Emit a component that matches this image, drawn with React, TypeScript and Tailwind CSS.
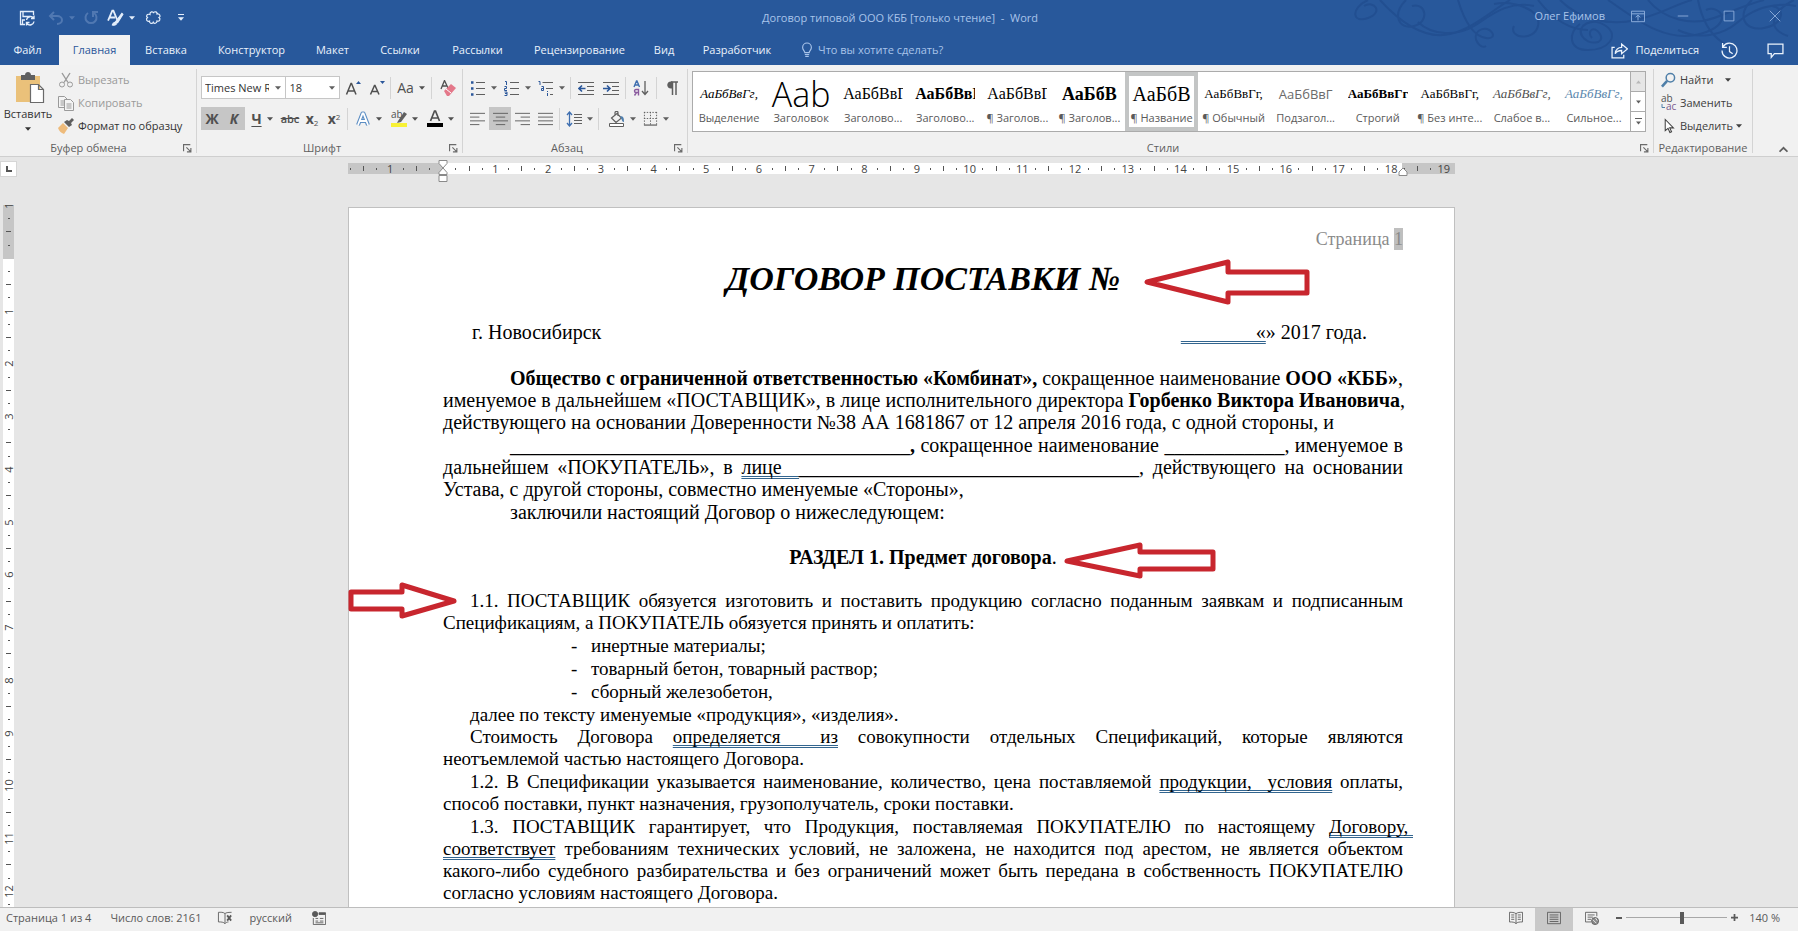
import React from "react";
import { clsx } from "clsx";

type KidsProps = { children?: React.ReactNode; className?: string };

const TABS = [
  { name: "Вставка", w: "w-[72px]" },
  { name: "Конструктор", w: "w-[99px]" },
  { name: "Макет", w: "w-[63px]" },
  { name: "Ссылки", w: "w-[72px]" },
  { name: "Рассылки", w: "w-[83px]" },
  { name: "Рецензирование", w: "w-[121px]" },
  { name: "Вид", w: "w-[48px]" },
  { name: "Разработчик", w: "w-[98px]" },
];

const STYLES = [
  { sample: "АаБбВвГг,", name: "Выделение", cls: "italic text-[13px]" },
  { sample: "Ааb", name: "Заголовок", cls: "font-['Open_Sans'] font-light text-[34px]" },
  { sample: "АаБбВвГ", name: "Заголово...", cls: "text-base" },
  { sample: "АаБбВвГ", name: "Заголово...", cls: "text-base font-bold" },
  { sample: "АаБбВвГ", name: "¶ Заголов...", cls: "text-base" },
  { sample: "АаБбВ", name: "¶ Заголов...", cls: "text-lg font-bold" },
  { sample: "АаБбВ", name: "¶ Название", cls: "text-xl", active: true },
  { sample: "АаБбВвГг,", name: "¶ Обычный", cls: "text-[13px]" },
  { sample: "АаБбВвГ", name: "Подзагол...", cls: "font-['Open_Sans'] text-[13px] text-[#6a6a6a]" },
  { sample: "АаБбВвГг", name: "Строгий", cls: "text-[13px] font-bold" },
  { sample: "АаБбВвГг,", name: "¶ Без инте...", cls: "text-[13px]" },
  { sample: "АаБбВвГг,", name: "Слабое в...", cls: "text-[13px] italic text-[#505050]" },
  { sample: "АаБбВвГг,", name: "Сильное...", cls: "text-[13px] italic text-[#5b87ad]" },
];

function Caret({ className }: { className?: string }) {
  return (
    <svg className={clsx("h-1 shrink-0", className ?? "w-[7px]")} viewBox="0 0 7 4" fill="currentColor">
      <path d="M0 0h7L3.5 4z" />
    </svg>
  );
}

function Icon({ children, className }: KidsProps) {
  return (
    <svg className={clsx("shrink-0", className ?? "size-4")} viewBox="0 0 16 16" fill="none" stroke="currentColor">
      {children}
    </svg>
  );
}

function Sep() {
  return <span className="mx-[2px] h-[22px] w-px shrink-0 bg-[#d4d4d4]" />;
}

type BtnProps = KidsProps & { label: string; caret?: boolean };
function Btn({ label, caret, className, children }: BtnProps) {
  return (
    <button
      type="button"
      aria-label={label}
      className={clsx("flex h-[23px] shrink-0 items-center justify-center gap-[5px]", className)}
    >
      {children}
      {caret && <Caret className="w-[6px]" />}
    </button>
  );
}

// ribbon group: controls on top, caption and launcher at the bottom
type GroupProps = KidsProps & { title: string; launcher?: boolean };
function Group({ title, launcher, className, children }: GroupProps) {
  return (
    <section className={clsx("mb-[3px] mt-1 flex flex-col border-r border-[#d4d4d4]", className)}>
      <div className="flex-1">{children}</div>
      <div className="-mb-1 flex h-[18px] items-center">
        <span className={clsx("flex-1 text-center text-[#5f5f5f]", launcher && "pr-[6px]")}>{title}</span>
        {launcher && (
          <button type="button" aria-label={title} className="pr-1 text-[#6a6a6a]">
            <Icon className="size-[9px]">
              <path strokeWidth="2" d="M1 13V1h12M6 6l8 8M14 7v7H7" />
            </Icon>
          </button>
        )}
      </div>
    </section>
  );
}

function Swirls() {
  return (
    <svg
      className="pointer-events-none absolute right-0 top-0 h-[60px] w-[450px]"
      viewBox="0 0 450 60"
      fill="none"
      stroke="#224f91"
      strokeWidth="2"
    >
      <path d="M20 0c-18 8-16 24 0 18s6-18-4-12M32 0c20 22 44 40 70 34 22-5 40-22 60-34M58 0c-14 14-8 30 8 26s12-24-2-20" />
      <path d="M70 22c14 14 40 14 56 4s34-26 60-20M110 0c6 20 14 36 28 38s4-14-6-8 0 20 6 16" />
      <path d="M146 4c20-4 48 6 44 22s-30 12-24 0M190 0c14 18 30 30 50 30" />
      <path d="M232 24c-12 8-12 26 8 26s32-14 18-24-30 0-24 10 24 8 18-2-14-2-8 4" />
      <path d="M212 0c20 20 50 26 76 20s40-16 56-20M260 0c24 16 56 44 92 34s20-30 6-24M300 0c16 20 44 26 66 18s34-14 50-18" />
      <path d="M350 0c4 20 12 34 24 42s12 12 4 8M330 30c20 10 44 6 60-8s34-20 58-16M404 0c-16 14-8 32 12 28s22-20 8-22M446 0c-20 10-30 28-6 36" />
    </svg>
  );
}

function TitleBar() {
  return (
    <div className="flex h-[35px] items-center text-[#e4eefb]">
      <div className="flex flex-1 items-center pl-[19px]">
        <button type="button" aria-label="Сохранить">
          <Icon>
            <path strokeWidth="1.300" d="M6 14.500H1.500v-13h13V5M4 1.500v5h7M3.500 14v-4H6" />
            <path strokeWidth="1.400" d="M7.500 10a4 4 0 0 1 7-2M15 5.500v3h-3M15 11.500a4 4 0 0 1-7 2M7.500 15.500v-3h3" />
          </Icon>
        </button>
        <button type="button" aria-label="Отменить" className="ml-[13px] flex items-center gap-[5px] text-[#5078b2]">
          <Icon>
            <path strokeWidth="2" d="M6 2L2 6l4 4M2 6h7c3 0 5 2 5 4s-2 4-5 4" />
          </Icon>
          <Caret className="w-[6px]" />
        </button>
        <button type="button" aria-label="Повторить" className="ml-2 text-[#5078b2]">
          <Icon>
            <path strokeWidth="2" d="M11 3a5.500 5.500 0 1 1-6 0M10 7V2h5" />
          </Icon>
        </button>
        <button type="button" aria-label="Стили" className="ml-2 flex items-center gap-[5px]">
          <Icon className="size-[17px]">
            <path strokeWidth="1.700" d="M1 11L5 1.500h1L9.500 10M2.500 8h5" />
            <path fill="currentColor" d="M8 12l6-8 1 1-5 8zM5 15c1-3 3-3 4-1-1 1-3 1.500-4 1z" />
          </Icon>
          <Caret className="w-[6px]" />
        </button>
        <button type="button" aria-label="Облако" className="ml-[10px]">
          <Icon className="h-4 w-[17px]">
            <path
              strokeWidth="1.200"
              d="M4.500 4.500c-.5-3 3-3.500 3.500-1.500.5-2 4-1.500 3.500 1 3-.5 4 2.500 2 3.500 2 1.500.5 4.500-2 3.500 0 2.500-3 3-3.800 1.200-1 2-4 1.300-3.700-1-2.800.8-4-2.200-2-3.700-2-1.500-.5-4 2.500-3z"
            />
          </Icon>
        </button>
        <button type="button" aria-label="Настройка панели" className="ml-4 flex flex-col items-center gap-[2px]">
          <span className="h-px w-[6px] bg-current" />
          <Caret className="w-[6px]" />
        </button>
      </div>
      <h1 className="text-[#a9c4ea]">Договор типовой ООО КББ [только чтение] &nbsp;-&nbsp; Word</h1>
      <div className="relative flex flex-1 items-center justify-end pb-1 pr-[17px] text-[#8fafdd]">
        <span className="mr-[26px] text-[#a9c4ea]">Олег Ефимов</span>
        <button type="button" aria-label="Параметры ленты" className="mr-8">
          <Icon className="size-[14px]">
            <path strokeWidth="1.100" d="M.5 2.500h15v12H.5zM.5 5.500h15M8 13V7M5.500 9.500L8 7l2.500 2.500" />
          </Icon>
        </button>
        <button type="button" aria-label="Свернуть" className="mr-[34px]">
          <Icon className="size-3">
            <path strokeWidth="1.200" d="M1 8h14" />
          </Icon>
        </button>
        <button type="button" aria-label="Развернуть" className="mr-[34px]">
          <Icon className="size-3">
            <path strokeWidth="1.200" d="M1.500 1.500h13v13h-13z" />
          </Icon>
        </button>
        <button type="button" aria-label="Закрыть">
          <Icon className="size-3">
            <path strokeWidth="1.200" d="M1 1l14 14M15 1L1 15" />
          </Icon>
        </button>
      </div>
    </div>
  );
}

function Tabs() {
  return (
    <nav className="relative flex h-[30px] items-stretch text-[#eaf2fc]">
      <button type="button" className="w-[59px] pr-1">Файл</button>
      <button type="button" className="w-[71px] bg-[#f2f2f2] text-[#2b579a]">Главная</button>
      {TABS.map((t) => (
        <button key={t.name} type="button" className={clsx("shrink-0", t.w)}>
          {t.name}
        </button>
      ))}
      <button type="button" className="ml-[14px] flex items-center gap-1 text-[#a9c4ea]">
        <Icon className="h-4 w-[14px]">
          <path strokeWidth="1.300" d="M5.500 11c0-2-2.500-3-2.500-6a5 5 0 0 1 10 0c0 3-2.500 4-2.500 6zM5.500 13.200h5M6 15.300h4" />
        </Icon>
        Что вы хотите сделать?
      </button>
      <div className="ml-auto flex items-center pr-[14px]">
        <button type="button" className="flex items-center gap-2">
          <Icon className="size-[17px]">
            <path strokeWidth="1.200" d="M3.500 5H1v10h11v-3M4 11c0-4 3-6 6-6V2l5.500 4.500L10 11V8c-3 0-5 1-6 3z" />
          </Icon>
          Поделиться
        </button>
        <button type="button" aria-label="Журнал" className="ml-[22px]">
          <Icon className="size-[17px]">
            <path strokeWidth="1.200" d="M2 4.500A7 7 0 1 1 1 8M1.500 1v4h4M8 4v5l3 2" />
          </Icon>
        </button>
        <button type="button" aria-label="Примечания" className="ml-[29px]">
          <Icon className="size-[17px]">
            <path strokeWidth="1.200" d="M1 2h14v9H7l-3 3.500V11H1z" />
          </Icon>
        </button>
      </div>
    </nav>
  );
}

function ClipboardGroup() {
  return (
    <Group title="Буфер обмена" launcher className="w-[197px]">
      <div className="flex">
        <button type="button" className="flex w-14 flex-col items-center pt-[3px] text-[#333]">
          <svg className="ml-1 h-8 w-[30px]" viewBox="0 0 30 32">
            <path fill="#eac17a" d="M1 4h24v26H1z" />
            <path fill="#5f5f5f" d="M6 3h4c0-4 6-4 6 0h4v5H6z" />
            <path fill="#fff" stroke="#6a6a6a" strokeWidth="1.200" d="M15.500 12.500h8l5 5v13h-13zM23.500 12.500v5h5" />
          </svg>
          <span className="mt-[2px]">Вставить</span>
          <Caret className="mt-[5px] w-[6px]" />
        </button>
        <div className="-mt-px flex flex-col items-start pl-[2px]">
          <button type="button" className="flex h-[23px] items-center gap-1 text-[#9a9a9a]">
            <Icon>
              <path strokeWidth="1.400" d="M4 1l6 9.500M12 1L6 10.500" />
              <circle cx="4" cy="12.500" r="2.500" />
              <circle cx="12" cy="12.500" r="2.500" />
            </Icon>
            Вырезать
          </button>
          <button type="button" className="flex h-[23px] items-center gap-1 text-[#9a9a9a]">
            <Icon>
              <path fill="#f4f4f4" d="M.5 1.500h6l3 3v8h-9zM2.500 6h5M2.500 8h5M2.500 10h5" />
              <path fill="#f4f4f4" d="M6.500 4.500h6l3 3v8h-9zM8.500 9h5M8.500 11h5M8.500 13h5" />
            </Icon>
            Копировать
          </button>
          <button type="button" className="flex h-[23px] items-center gap-1 text-[#333]">
            <Icon>
              <path stroke="none" fill="#5f5f5f" d="M11 3l3-3 2 2-3 3 1 2-3 2-5-5 3-2z" />
              <path stroke="none" fill="#eebb7b" d="M5 5l5 5-4 6c-3-1-5-3-6-6z" />
            </Icon>
            Формат по образцу
          </button>
        </div>
      </div>
    </Group>
  );
}

type ComboProps = { label: string; value: string; className: string };
function Combo({ label, value, className }: ComboProps) {
  return (
    <label className={clsx("relative h-[23px] border border-[#c6c6c6] bg-white", className)}>
      <select aria-label={label} defaultValue={value} className="h-full w-full appearance-none bg-white pl-[3px] pr-4 text-[#333] outline-none">
        <option>{value}</option>
      </select>
      <Caret className="absolute right-1 top-[9px] w-[6px] text-[#5f5f5f]" />
    </label>
  );
}

function FontGroup() {
  return (
    <Group title="Шрифт" launcher className="w-[266px] pl-1 text-[#505050]">
      <div className="mt-[7px] flex items-center">
        <Combo label="Шрифт" value="Times New R" className="w-[86px]" />
        <Combo label="Размер" value="18" className="-ml-px w-[55px]" />
        <Btn label="Увеличить размер" className="w-[26px]">
          <Icon>
            <path strokeWidth="1.500" d="M1.500 14.500L6 3.500h.5l4.500 11M3 11h6.500" />
            <path stroke="none" fill="#2b579a" d="M11 4l2.500-3L16 4z" />
          </Icon>
        </Btn>
        <Btn label="Уменьшить размер" className="w-[22px]">
          <Icon>
            <path strokeWidth="1.500" d="M1.500 14.500L5.500 5.500H6l4 9M3 11.500h5.500" />
            <path stroke="none" fill="#2b579a" d="M11 1h5l-2.500 3z" />
          </Icon>
        </Btn>
        <Sep />
        <Btn label="Регистр" caret className="w-9">
          <span className="text-sm">Aa</span>
        </Btn>
        <Sep />
        <Btn label="Очистить формат" className="w-7">
          <Icon>
            <path strokeWidth="1.300" d="M1 9l3.500-8.500L8 8M2.500 6h4" />
            <path stroke="none" fill="#e4788a" d="M4 11l7-7 5 4-7 8H7z" />
            <path stroke="#fff" d="M6 9l5 4" />
          </Icon>
        </Btn>
      </div>
      <div className="mt-2 flex items-center">
        <Btn label="Полужирный" className="w-[22px] bg-[#c6c6c6]">
          <b className="text-sm">Ж</b>
        </Btn>
        <Btn label="Курсив" className="w-[22px] bg-[#c6c6c6]">
          <b className="text-sm italic">К</b>
        </Btn>
        <Btn label="Подчеркнутый" caret className="w-[34px]">
          <b className="text-sm underline underline-offset-2">Ч</b>
        </Btn>
        <Btn label="Зачеркнутый" className="w-[22px]">
          <span className="text-[11px] font-semibold line-through">abc</span>
        </Btn>
        <Btn label="Подстрочный" className="w-[22px]">
          <span className="text-sm font-bold">
            x<sub className="text-[8px] font-normal">2</sub>
          </span>
        </Btn>
        <Btn label="Надстрочный" className="w-[22px]">
          <span className="text-sm font-bold">
            x<sup className="text-[8px] font-normal">2</sup>
          </span>
        </Btn>
        <Sep />
        <Btn label="Эффекты" caret className="w-9">
          <Icon>
            <path stroke="#5c8ec4" strokeWidth="4" strokeLinejoin="round" d="M3 14L7.500 2.500h1L13 14M5 10h6" />
            <path stroke="#fff" strokeWidth="1.800" d="M3 14L7.500 2.500h1L13 14M5 10h6" />
          </Icon>
        </Btn>
        <Btn label="Выделение цветом" caret className="w-9">
          <svg className="h-[19px] w-4 shrink-0" viewBox="0 0 16 19">
            <text x="0" y="9" fontSize="10" fill="#505050" className="font-['Open_Sans']">ab</text>
            <path fill="#5f5f5f" d="M7 12l6-9 3 2-6 8-4 1z" />
            <path fill="#f8f135" d="M0 14h16v4H0z" />
          </svg>
        </Btn>
        <Btn label="Цвет текста" caret className="w-9">
          <svg className="h-[19px] w-4 shrink-0" viewBox="0 0 16 19" fill="none">
            <path stroke="#505050" strokeWidth="1.700" d="M3.500 12L7.500 2h1l4 10M5 9h6" />
            <path fill="#000" d="M0 14h16v4H0z" />
          </svg>
        </Btn>
      </div>
    </Group>
  );
}

function ParagraphGroup() {
  return (
    <Group title="Абзац" launcher className="w-[225px] pl-[3px] text-[#5f5f5f]">
      <div className="mt-[7px] flex items-center">
        <Btn label="Маркеры" caret className="w-[34px]">
          <Icon>
            <path d="M6 2.500h9M6 8.500h9M6 14.500h9" />
            <path stroke="#2b579a" strokeWidth="2.500" d="M1 2.500h2.500M1 8.500h2.500M1 14.500h2.500" />
          </Icon>
        </Btn>
        <Btn label="Нумерация" caret className="w-[34px]">
          <Icon>
            <path d="M6 2.500h9M6 8.500h9M6 14.500h9" />
            <path stroke="#2b579a" d="M1 1.500h1.500V5M.5 6.500h2v2h-2v2h2.500M.5 12h2.500v3.500H.5M1 13.500h2" />
          </Icon>
        </Btn>
        <Btn label="Многоуровневый список" caret className="w-[34px]">
          <Icon>
            <path d="M4.500 2.500H15M8 8.500h7M12 14.500h3" />
            <path stroke="#2b579a" d="M.5 1.500H2V5M3.500 6.500h2v4h-2v-2h2M9.500 11v1M9.500 13v3" />
          </Icon>
        </Btn>
        <Sep />
        <Btn label="Уменьшить отступ" className="w-[26px]">
          <Icon>
            <path d="M0 2.500h16M9 6.500h7M9 10.500h7M0 14.500h16" />
            <path stroke="#2b579a" strokeWidth="1.600" d="M7.500 8.500H1M4 5.500l-3 3 3 3" />
          </Icon>
        </Btn>
        <Btn label="Увеличить отступ" className="w-6">
          <Icon>
            <path d="M0 2.500h16M9 6.500h7M9 10.500h7M0 14.500h16" />
            <path stroke="#2b579a" strokeWidth="1.600" d="M0 8.500h6.500M4 5.500l3 3-3 3" />
          </Icon>
        </Btn>
        <Sep />
        <Btn label="Сортировка" className="w-[26px]">
          <Icon>
            <path stroke="#3f6fb0" strokeWidth="1.400" d="M1 7l2.500-6H4l2.500 6M2 5h3.500" />
            <path stroke="#8a5a9e" strokeWidth="1.400" d="M1.500 15.500l2-3M5.500 15.500v-6H3c-2 0-2 3 0 3h2.500" />
            <path strokeWidth="1.300" d="M12 1v13M9 11l3 3.500 3-3.500" />
          </Icon>
        </Btn>
        <Sep />
        <Btn label="Знаки абзаца" className="w-[26px]">
          <Icon>
            <path strokeWidth="1.500" d="M8.500 2v13M12 2v13M14 2H7" />
            <path stroke="none" fill="currentColor" d="M8.500 1.500v7H7c-5 0-5-7 0-7z" />
          </Icon>
        </Btn>
      </div>
      <div className="mt-2 flex items-center">
        <Btn label="По левому краю" className="w-[23px]">
          <Icon className="size-[15px]">
            <path d="M0 2.500h16M0 6.500h10M0 10.500h16M0 14.500h10" />
          </Icon>
        </Btn>
        <Btn label="По центру" className="w-[22px] bg-[#c6c6c6]">
          <Icon className="size-[15px]">
            <path d="M0 2.500h16M3 6.500h10M0 10.500h16M3 14.500h10" />
          </Icon>
        </Btn>
        <Btn label="По правому краю" className="w-[23px]">
          <Icon className="size-[15px]">
            <path d="M0 2.500h16M6 6.500h10M0 10.500h16M6 14.500h10" />
          </Icon>
        </Btn>
        <Btn label="По ширине" className="w-[23px]">
          <Icon className="size-[15px]">
            <path d="M0 2.500h16M0 6.500h16M0 10.500h16M0 14.500h16" />
          </Icon>
        </Btn>
        <Sep />
        <Btn label="Интервал" caret className="w-[34px]">
          <Icon>
            <path d="M8 3.500h8M8 6.500h8M8 9.500h8M8 12.500h8" />
            <path stroke="#3f6fb0" strokeWidth="1.300" d="M3.500 1v14M1 4l2.500-3L6 4M1 12l2.500 3L6 12" />
          </Icon>
        </Btn>
        <Sep />
        <Btn label="Заливка" caret className="ml-1 w-[34px]">
          <Icon>
            <path strokeWidth="1.200" d="M2.500 7L8 2.500 12.500 7 7 11.500zM6 5V1.500c0-1.500 3-1.500 3 0V5" />
            <path stroke="none" fill="#4f7fae" d="M11 5c4 0 4 3 4 6-2 0-2-2-3-4z" />
            <path fill="#fff" d="M.5 12.500h14v3H.5z" />
          </Icon>
        </Btn>
        <Btn label="Границы" caret className="w-[34px]">
          <Icon className="size-[15px]">
            <path strokeDasharray="1.500 1.500" d="M1.500 1v14M8 1v14M14.500 1v14M1 1.500h14M1 8h14" />
            <path strokeWidth="1.300" d="M1 15h14" />
          </Icon>
        </Btn>
      </div>
    </Group>
  );
}

function StylesGroup() {
  return (
    <Group title="Стили" launcher className="min-w-0 flex-1 pl-1">
      <div className="mr-[7px] mt-[2px] flex h-[61px] border border-[#ababab] bg-white">
        <ul className="flex min-w-0 flex-1 text-black">
          {STYLES.map((s, i) => (
            <li key={i} className="min-w-0 flex-1">
              <button
                type="button"
                className={clsx(
                  "flex h-full w-full flex-col items-center justify-end border-4 pb-px",
                  s.active ? "border-[#c3c5c5]" : "border-transparent",
                )}
              >
                <span
                  className={clsx(
                    "w-[60px] overflow-hidden whitespace-nowrap text-center leading-8",
                    !s.cls.startsWith("font-") && "font-['Liberation_Serif']",
                    s.cls,
                  )}
                >
                  {s.sample}
                </span>
                <span className="whitespace-nowrap text-[#5a5a5a]">{s.name}</span>
              </button>
            </li>
          ))}
        </ul>
        <div className="flex w-[15px] flex-col divide-y divide-[#ababab] border-l border-[#ababab] text-[#5f5f5f]">
          <button type="button" aria-label="Вверх" className="flex flex-1 items-center justify-center bg-[#e6e6e6] text-[#b8b8b8]">
            <Caret className="w-[5px] rotate-180" />
          </button>
          <button type="button" aria-label="Вниз" className="flex flex-1 items-center justify-center">
            <Caret className="w-[5px]" />
          </button>
          <button type="button" aria-label="Все стили" className="flex flex-1 flex-col items-center justify-center gap-[2px]">
            <span className="h-px w-[7px] bg-current" />
            <Caret className="w-[5px]" />
          </button>
        </div>
      </div>
    </Group>
  );
}

function EditGroup() {
  return (
    <Group title="Редактирование" className="w-[99px]">
      <div className="-mt-px flex flex-col items-start pl-[7px] text-[#404040]">
        <button type="button" className="flex h-[23px] items-center gap-1">
          <Icon className="h-4 w-[15px]">
            <circle cx="10" cy="5.500" r="4.500" stroke="#4f7fa8" strokeWidth="1.600" />
            <path stroke="#4f7fa8" strokeWidth="2.800" d="M1 15l5.500-6" />
          </Icon>
          Найти
          <Caret className="ml-2 w-[6px]" />
        </button>
        <button type="button" className="flex h-[23px] items-center gap-1">
          <svg className="h-[18px] w-[15px] overflow-visible" viewBox="0 0 15 18">
            <text x="0" y="8" fontSize="10" fill="#505050" className="font-['Open_Sans']">ab</text>
            <text x="5" y="16" fontSize="10" fill="#7a5a8e" className="font-['Open_Sans']">ac</text>
            <path stroke="#4f7fa8" fill="none" d="M1 10v3.500h3" />
          </svg>
          Заменить
        </button>
        <button type="button" className="flex h-[23px] items-center gap-1">
          <Icon className="h-4 w-[15px]">
            <path fill="#fff" strokeWidth="1.100" d="M4.500 1v12l3-2.500 2 4.500 1.800-.8-2-4.200h4z" />
          </Icon>
          Выделить
          <Caret className="-ml-px w-[6px]" />
        </button>
      </div>
    </Group>
  );
}

function Ribbon() {
  return (
    <div className="flex h-[92px] border-b border-[#cfcfcf] bg-[#f1f1f1]">
      <ClipboardGroup />
      <FontGroup />
      <ParagraphGroup />
      <StylesGroup />
      <EditGroup />
      <div className="flex w-[45px] items-end justify-end pb-[2px] pr-[10px] text-[#5f5f5f]">
        <button type="button" aria-label="Свернуть ленту">
          <Icon className="size-[9px]">
            <path strokeWidth="3" d="M1 12l7-7 7 7" />
          </Icon>
        </button>
      </div>
    </div>
  );
}

// a quarter of a centimetre per mark
type MarkProps = { quarter: number; vertical?: boolean };
function RulerMark({ quarter, vertical }: MarkProps) {
  let mark = <span className={vertical ? "h-px w-[2px] bg-[#555]" : "h-[2px] w-px bg-[#555]"} />;
  if (quarter % 4 === 0) {
    mark = <span className={clsx("leading-none", vertical && "-rotate-90")}>{quarter === 0 ? "" : Math.abs(quarter / 4)}</span>;
  } else if (quarter % 2 === 0) {
    mark = <span className={vertical ? "h-px w-[5px] bg-[#555]" : "h-[5px] w-px bg-[#555]"} />;
  }
  return <span className="flex min-h-0 min-w-0 flex-1 items-center justify-center">{mark}</span>;
}

function range(from: number, to: number) {
  return Array.from({ length: to - from + 1 }, (_, i) => from + i);
}

function HorizontalRuler() {
  return (
    <div className="relative mx-auto mt-[6px] h-[11px] w-[1107px] bg-[linear-gradient(to_right,#c6c6c6_95px,#fff_95px,#fff_1054px,#c6c6c6_1054px)] text-[11px] text-[#444]">
      <div className="-ml-1 mr-[5px] flex h-full">
        {range(-7, 76).map((q) => (
          <RulerMark key={q} quarter={q} />
        ))}
      </div>
      <svg className="absolute left-[90px] top-[-3px] h-[22px] w-[10px]" viewBox="0 0 10 22" fill="#fff" stroke="#8a8a8a">
        <path d="M1 .5h8v3L5 8l4 4.500v2H1v-2L5 8 1 3.500zM1 15.500h8v6H1z" />
      </svg>
      <svg className="absolute left-[1050px] top-1 h-[9px] w-[10px]" viewBox="0 0 10 9" fill="#fff" stroke="#8a8a8a">
        <path d="M5 1l4 4v3.500H1V5z" />
      </svg>
    </div>
  );
}

function VerticalRuler() {
  return (
    <div className="mt-7 ml-[3px] flex w-[11px] flex-1 flex-col overflow-hidden bg-[linear-gradient(to_bottom,#c6c6c6_54px,#fff_54px)] text-[11px] text-[#444]">
      <div className="-mb-1 -mt-[6px] flex flex-1 flex-col">
        {range(-4, 49).map((q) => (
          <RulerMark key={q} quarter={q} vertical />
        ))}
      </div>
    </div>
  );
}

// text line stretched between both margins
function Full({ children, className }: KidsProps) {
  return (
    <span className={clsx("block whitespace-nowrap text-justify [text-align-last:justify]", className)}>{children}</span>
  );
}

function Last({ children, className }: KidsProps) {
  return <span className={clsx("block whitespace-nowrap", className)}>{children}</span>;
}

// grammar check mark
function Check({ children, className }: KidsProps) {
  return (
    <span
      className={clsx(
        "underline decoration-[#33658f] decoration-double decoration-1 underline-offset-2 [text-decoration-skip-ink:none]",
        className,
      )}
    >
      {children}
    </span>
  );
}

function Arrow({ d, className, viewBox }: { d: string; className: string; viewBox: string }) {
  return (
    <svg className={clsx("absolute", className)} viewBox={viewBox} fill="none" stroke="#c8262e" strokeWidth="5" strokeLinejoin="round">
      <path d={d} />
    </svg>
  );
}

function Page() {
  return (
    <article className="relative mx-auto mt-[33px] w-[1107px] flex-1 border border-b-0 border-[#c0c0c0] bg-white pl-[94px] pr-[51px] pt-5 font-['Liberation_Serif',serif] text-xl leading-[22px] text-black">
      <p className="text-right text-lg leading-[22px] text-[#8a8a8a]">
        Страница <span className="inline-block bg-[#bfbfbf]">1</span>
      </p>
      <h2 className="mt-[9px] text-center text-[34px] font-bold italic leading-10">ДОГОВОР ПОСТАВКИ №</h2>
      <div className="mt-[22px] flex justify-between pl-[29px] pr-9">
        <span>г. Новосибирск</span>
        <span className="whitespace-pre">
          <Check>{"               «"}</Check>» 2017 года.
        </span>
      </div>
      <p className="mb-px mt-6">
        <Full className="pl-[67px]">
          <b>Общество с ограниченной ответственностью «Комбинат»,</b> сокращенное наименование <b>ООО «КББ»</b>,
        </Full>
        <Full>
          именуемое в дальнейшем «ПОСТАВЩИК», в лице исполнительного директора <b>Горбенко Виктора Ивановича</b>,
        </Full>
        <Last>действующего на основании Доверенности №38 АА 1681867 от 12 апреля 2016 года, с одной стороны, и</Last>
      </p>
      <p className="my-px">
        <Full className="pl-[67px]">
          ________________________________________<b>,</b> сокращенное наименование ____________, именуемое в
        </Full>
        <Full>
          дальнейшем «ПОКУПАТЕЛЬ», в <Check>лице&nbsp;&nbsp;</Check>__________________________________, действующего на основании
        </Full>
        <Last>Устава, с другой стороны, совместно именуемые «Стороны»,</Last>
      </p>
      <p className="mb-px">
        <Last className="pl-[67px]">заключили настоящий Договор о нижеследующем:</Last>
      </p>
      <h3 className="mb-[22px] mt-[23px] text-center">
        <b>РАЗДЕЛ 1. Предмет договора</b>.
      </h3>
      <section className="text-[19px] leading-[22px]">
        <p className="mb-px">
          <Full className="pl-[27px]">1.1. ПОСТАВЩИК обязуется изготовить и поставить продукцию согласно поданным заявкам и подписанным</Full>
          <Last>Спецификациям, а ПОКУПАТЕЛЬ обязуется принять и оплатить:</Last>
        </p>
        <ul className="pl-[128px]">
          {["инертные материалы;", "товарный бетон, товарный раствор;", "сборный железобетон,"].map((item) => (
            <li key={item} className="mb-px flex">
              <span className="w-5">-</span>
              {item}
            </li>
          ))}
        </ul>
        <p>
          <Last className="pl-[27px]">далее по тексту именуемые «продукция», «изделия».</Last>
        </p>
        <p className="mb-px">
          <Full className="pl-[27px]">
            Стоимость Договора <Check>определяется&nbsp; из</Check> совокупности отдельных Спецификаций, которые являются
          </Full>
          <Last>неотъемлемой частью настоящего Договора.</Last>
        </p>
        <p className="mb-px">
          <Full className="pl-[27px]">
            1.2. В Спецификации указывается наименование, количество, цена поставляемой{" "}
            <Check>продукции,&nbsp; условия</Check> оплаты,
          </Full>
          <Last>способ поставки, пункт назначения, грузополучатель, сроки поставки.</Last>
        </p>
        <p>
          <Full className="pl-[27px]">
            1.3. ПОСТАВЩИК гарантирует, что Продукция, поставляемая ПОКУПАТЕЛЮ по настоящему{" "}
            <Check className="-mr-[10px]">Договору,&nbsp;</Check>
          </Full>
          <Full>
            <Check>соответствует</Check> требованиям технических условий, не заложена, не находится под арестом, не является объектом
          </Full>
          <Full>какого-либо судебного разбирательства и без ограничений может быть передана в собственность ПОКУПАТЕЛЮ</Full>
          <Last>согласно условиям настоящего Договора.</Last>
        </p>
      </section>

      <Arrow className="left-[794px] top-[51px] h-[46px] w-[170px]" viewBox="0 0 170 46" d="M4 23L85 3v10h79v21H85v9z" />
      <Arrow className="left-[714px] top-[333px] h-10 w-[154px]" viewBox="0 0 154 40" d="M4 20L77 4v7h73v17H77v7z" />
      <Arrow className="-left-px top-[373px] h-10 w-[110px]" viewBox="0 0 110 40" d="M106 20L54 4v7H3v17h51v7z" />
    </article>
  );
}

function StatusBar() {
  return (
    <footer className="flex h-6 shrink-0 items-center border-t border-[#bdbdbd] bg-[#f1f1f1] pb-1 pl-[6px] pr-[18px] text-[#5a5a5a]">
      <span>Страница 1 из 4</span>
      <span className="ml-[19px]">Число слов: 2161</span>
      <button type="button" aria-label="Правописание" className="ml-4">
        <Icon className="h-[14px] w-4">
          <path d="M8 3C6 1 3 1.500 .5 1.500v11c3 0 6 0 7.500 2 1-1 2-2 4-2M8 3v11M8 3c1-1 3-1.500 7.500-1.500" />
          <path strokeWidth="2" d="M10.500 5l4.500 6M15 5l-4.500 6" />
        </Icon>
      </button>
      <button type="button" className="ml-4">русский</button>
      <button type="button" aria-label="Макрос" className="ml-5">
        <Icon className="size-[14px]">
          <circle cx="3.500" cy="3.500" r="3" fill="currentColor" />
          <path fill="currentColor" d="M8 2h7.500v2H8z" />
          <path d="M1.500 8v7.500h14V4M4 8.500h3M9 8.500h4M4 11.500h3M9 11.500h4M4 13.500h9" />
        </Icon>
      </button>
      <div className="ml-auto flex items-center">
        <button type="button" aria-label="Режим чтения">
          <Icon className="size-[14px]">
            <path d="M8 3C6 1.500 3 1.500.5 1.500v11c3 0 6 0 7.500 2 1.500-2 4.500-2 7.500-2v-11c-3 0-5.500 0-7.500 1.500zM8 3v11M2.500 4.500H6M2.500 7H6M2.500 9.500H6M10 4.500h3.500M10 7h3.500M10 9.500h3.500" />
          </Icon>
        </button>
        <button type="button" aria-label="Разметка страницы" className="-mb-1 ml-3 mr-3 flex h-[23px] w-[38px] items-center justify-center bg-[#c9c9c9] pb-1">
          <Icon className="size-[14px]">
            <path d="M.5 1.500h15v13H.5zM3 4.500h10M3 7h10M3 9.500h10M3 12h10" />
          </Icon>
        </button>
        <button type="button" aria-label="Веб-документ">
          <Icon className="size-[14px]">
            <path d="M7 12.500H.5v-11h13V6M3 4.500h8M3 7h6M3 9.500h4" />
            <circle cx="11.500" cy="11.500" r="4" fill="#8a8a8a" />
            <path stroke="#f1f1f1" d="M9 10l4 4M12 8l2 3" />
          </Icon>
        </button>
        <button type="button" aria-label="Уменьшить" className="ml-[17px] h-[2px] w-[6px] bg-[#5a5a5a]" />
        <input
          type="range"
          aria-label="Масштаб"
          min={0}
          max={100}
          defaultValue={55}
          className="mx-1 h-3 w-[101px] appearance-none bg-[linear-gradient(#a8a8a8,#a8a8a8)] bg-[length:100%_1px] bg-center bg-no-repeat [&::-webkit-slider-thumb]:h-3 [&::-webkit-slider-thumb]:w-1 [&::-webkit-slider-thumb]:appearance-none [&::-webkit-slider-thumb]:bg-[#5a5a5a]"
        />
        <button type="button" aria-label="Увеличить" className="mr-[11px]">
          <Icon className="size-[7px]">
            <path strokeWidth="4" d="M0 8h16M8 0v16" />
          </Icon>
        </button>
        <span>140 %</span>
      </div>
    </footer>
  );
}

function App() {
  return (
    <div className="flex h-screen flex-col overflow-hidden bg-[#e6e6e6] font-['Open_Sans','Noto_Sans',sans-serif] text-[11px] leading-4">
      <header className="shrink-0">
        <div className="relative bg-[#28589b]">
          <Swirls />
          <TitleBar />
          <Tabs />
        </div>
        <Ribbon />
      </header>
      <main className="flex min-h-0 flex-1">
        <div className="flex w-[17px] shrink-0 flex-col">
          <div className="mt-1 flex h-4 items-center justify-center border border-[#d6d6d6] bg-white">
            <span className="size-[6px] border-b-2 border-l-2 border-[#555]" />
          </div>
          <VerticalRuler />
        </div>
        <div className="flex min-w-0 flex-1 flex-col overflow-hidden pr-3">
          <HorizontalRuler />
          <Page />
        </div>
      </main>
      <StatusBar />
    </div>
  );
}

export default App;
